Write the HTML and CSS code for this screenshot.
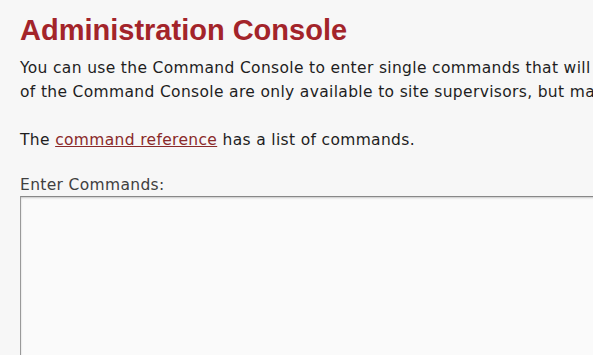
FILE: index.html
```html
<!DOCTYPE html>
<html>
<head>
<meta charset="utf-8">
<link rel="stylesheet" href="styles.css">
</head>
<body>
<div class="page">
  <h1 class="title">Administration Console</h1>
  <p class="intro">You can use the Command Console to enter single commands that will be executed immediately. Most features<br>of the Command Console are only available to site supervisors, but many commands can be used by anyone.</p>
  <p class="intro">The <a class="ref" href="#">command reference</a> has a list of commands.</p>
  <label class="label" for="cmds">Enter Commands:</label>
  <textarea id="cmds" class="cmds"></textarea>
</div>
</body>
</html>
```
FILE: styles.css
```css
html, body {
  margin: 0;
  padding: 0;
  background: #f7f7f7;
  overflow: hidden;
}
.page {
  padding: 0 0 0 20px;
  width: 1200px;
  font-family: "DejaVu Sans", Verdana, sans-serif;
  font-size: 15.5px;
  letter-spacing: 0.34px;
  color: #1e1e1e;
}
.title {
  margin: 14px 0 0 0;
  font-family: "Liberation Sans", Arial, sans-serif;
  font-weight: bold;
  font-size: 29px;
  letter-spacing: 0;
  line-height: 32px;
  color: #a3242a;
}
.intro {
  margin: 10px 0 0 0;
  line-height: 24px;
  white-space: nowrap;
}
.intro + .intro {
  margin-top: 24px;
}
.ref {
  color: #8a2a2a;
  text-decoration: underline;
}
.label {
  display: block;
  margin-top: 23px;
  line-height: 20px;
  color: #404040;
}
.cmds {
  display: block;
  margin-top: 1px;
  width: 700px;
  height: 300px;
  background: #fafafa;
  border: 1px solid #aaa;
  border-top-color: #888;
  border-left-color: #999;
  box-shadow: inset 0 1px 2px rgba(0,0,0,0.2);
  resize: none;
}
```
